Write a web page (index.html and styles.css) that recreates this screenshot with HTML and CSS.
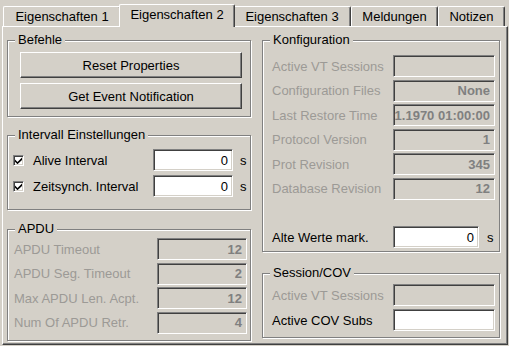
FILE: index.html
```html
<!DOCTYPE html>
<html>
<head>
	<title>Eigenschaften 2</title>
	<link rel="stylesheet" href="styles.css">
</head>
<body>
	<div class="tab-strip">
		<div class="tab tab-e1">Eigenschaften 1</div>
		<div class="tab tab-e2 active">Eigenschaften 2</div>
		<div class="tab tab-e3">Eigenschaften 3</div>
		<div class="tab tab-msg">Meldungen</div>
		<div class="tab tab-notes">Notizen</div>
	</div>
	<div class="tab-panel">
		<div class="col col-left">
			<fieldset class="group">
				<legend>Befehle</legend>
				<div class="group-body befehle-body">
					<button class="btn">Reset Properties</button>
					<button class="btn">Get Event Notification</button>
				</div>
			</fieldset>

			<fieldset class="group group-interval">
				<legend>Intervall Einstellungen</legend>
				<div class="group-body interval-body">
					<div class="check-row">
						<span class="check"><svg width="7" height="7" viewBox="0 0 7 7"><path d="M0 2.5 L2.5 5 L7 0.5 L7 3 L2.5 7.2 L0 4.7Z" fill="#000"/></svg></span>
						<span class="check-label">Alive Interval</span>
						<span class="field">0</span>
						<span class="unit">s</span>
					</div>
					<div class="check-row">
						<span class="check"><svg width="7" height="7" viewBox="0 0 7 7"><path d="M0 2.5 L2.5 5 L7 0.5 L7 3 L2.5 7.2 L0 4.7Z" fill="#000"/></svg></span>
						<span class="check-label">Zeitsynch. Interval</span>
						<span class="field">0</span>
						<span class="unit">s</span>
					</div>
				</div>
			</fieldset>

			<fieldset class="group group-apdu">
				<legend>APDU</legend>
				<div class="group-body apdu-body">
					<span class="lbl off">APDU Timeout</span><span class="value"><span>12</span></span>
					<span class="lbl off">APDU Seg. Timeout</span><span class="value"><span>2</span></span>
					<span class="lbl off">Max APDU Len. Acpt.</span><span class="value"><span>12</span></span>
					<span class="lbl off">Num Of APDU Retr.</span><span class="value"><span>4</span></span>
				</div>
			</fieldset>
		</div>

		<div class="col col-right">
			<fieldset class="group">
				<legend>Konfiguration</legend>
				<div class="group-body konfig-body">
					<div class="konfig-grid">
						<span class="lbl off">Active VT Sessions</span><span class="value"><span></span></span>
						<span class="lbl off">Configuration Files</span><span class="value"><span>None</span></span>
						<span class="lbl off">Last Restore Time</span><span class="value"><span>01.01.1970 01:00:00</span></span>
						<span class="lbl off">Protocol Version</span><span class="value"><span>1</span></span>
						<span class="lbl off">Prot Revision</span><span class="value"><span>345</span></span>
						<span class="lbl off">Database Revision</span><span class="value"><span>12</span></span>
					</div>
					<div class="mark-row">
						<span class="lbl">Alte Werte mark.</span>
						<span class="field">0</span>
						<span class="unit">s</span>
					</div>
				</div>
			</fieldset>

			<fieldset class="group group-session">
				<legend>Session/COV</legend>
				<div class="group-body session-body">
					<span class="lbl off">Active VT Sessions</span><span class="value"><span></span></span>
					<span class="lbl">Active COV Subs</span><span class="field"></span>
				</div>
			</fieldset>
		</div>
	</div>
</body>
</html>
```

FILE: styles.css
```css
*{
	margin: 0;
	padding: 0;
	box-sizing: border-box;
	font-family: "Liberation Sans", Arial, sans-serif;
}
body{
	width: 509px;
	height: 346px;
	overflow: hidden;
	background: #d4d0c8;
	font-size: 13px;
	color: #000;
}

/* tabs */
.tab-strip{
	display: flex;
	align-items: flex-end;
	height: 26px;
	padding-left: 3px;
}
.tab{
	height: 20px;
	padding-top: 2px;
	line-height: 16px;
	text-align: center;
	white-space: nowrap;
	border: 1px solid;
	border-bottom: 0;
	border-color: #fff #404040 #404040 #fff;
	border-radius: 2px 2px 0 0;
	box-shadow: inset -1px 0 #808080;
}
.tab-e1{ width: 118px; }
.tab-e2{ width: 112px; }
.tab-e3{ width: 118px; }
.tab-msg{ width: 87px; }
.tab-notes{ width: 67px; }
.tab.active{
	position: relative;
	z-index: 2;
	width: 116px;
	height: 23px;
	margin: 0 -2px -1px;
	padding-top: 2px;
	background: #d4d0c8;
}

.tab-panel{
	display: flex;
	gap: 11px;
	width: 506px;
	height: 319px;
	margin-left: 2px;
	padding: 6px 0 0 4px;
	border: 1px solid;
	border-color: #fff #404040 #404040 #fff;
	box-shadow: inset -1px -1px #808080;
}
.col{
	display: flex;
	flex-direction: column;
}
.col-left{ width: 244px; }
.col-right{ width: 238px; }

/* group boxes */
.group{
	min-width: 0;
	border: 1px solid #808080;
	box-shadow: inset 1px 1px #fff, 1px 1px #fff;
}
.group legend{
	margin-left: 7px;
	padding: 0 3px;
	line-height: 14px;
	background: #d4d0c8;
}
.group-interval{ margin-top: 11px; }
.group-apdu{ margin-top: 12px; }
.group-session{ margin-top: 14px; }

.befehle-body{
	display: flex;
	flex-direction: column;
	gap: 5px;
	padding: 5px 8px 7px 12px;
}
.btn{
	height: 26px;
	width: 100%;
	background: #d4d0c8;
	border: 1px solid;
	border-color: #fff #404040 #404040 #fff;
	box-shadow: inset -1px -1px #808080;
	font-size: 13px;
	color: #000;
}

.interval-body{
	display: flex;
	flex-direction: column;
	gap: 4px;
	padding: 7px 0 12px 5px;
}
.check-row{
	display: flex;
	align-items: center;
	height: 22px;
}
.check{
	display: flex;
	align-items: center;
	justify-content: center;
	width: 11px;
	height: 11px;
	margin-top: 1px;
	background: #fff;
	border: 1px solid;
	border-color: #808080 #fff #fff #808080;
	box-shadow: inset 1px 1px #404040, inset -1px -1px #d4d0c8;
}
.check-label{
	flex: 1;
	margin-left: 9px;
}

.lbl{
	display: flex;
	align-items: center;
	white-space: nowrap;
}
.lbl.off{ color: #9c9a96; }

.field, .value{
	display: flex;
	align-items: center;
	justify-content: flex-end;
	height: 22px;
	overflow: hidden;
	white-space: nowrap;
	border: 1px solid;
	border-color: #808080 #fff #fff #808080;
	box-shadow: inset 1px 1px #404040, inset -1px -1px #d4d0c8;
}
.field{
	width: 80px;
	padding-right: 4px;
	background: #fff;
}
.value{
	padding-right: 4px;
	background: #d4d0c8;
	color: #808080;
	font-weight: bold;
}
.value span{
	flex-shrink: 0;
}
.unit{
	width: 17px;
	padding-left: 7px;
}

.apdu-body{
	display: grid;
	grid-template-columns: 143px 90px;
	row-gap: 2.67px;
	padding: 2px 3px 6px 6px;
}

.konfig-body{
	padding: 8px 4px 3px 9px;
}
.konfig-grid{
	display: grid;
	grid-template-columns: 121px 102px;
	row-gap: 2.5px;
}
.mark-row{
	display: grid;
	grid-template-columns: 121px 86px 1fr;
	height: 22px;
	margin-top: 26.5px;
}
.mark-row .field{ width: 86px; }
.mark-row .unit{
	display: flex;
	align-items: center;
	width: auto;
	padding-left: 8px;
}

.session-body{
	display: grid;
	grid-template-columns: 121px 102px;
	row-gap: 3px;
	padding: 4px 4px 6px 9px;
}
.session-body .field{ width: 102px; }
```
